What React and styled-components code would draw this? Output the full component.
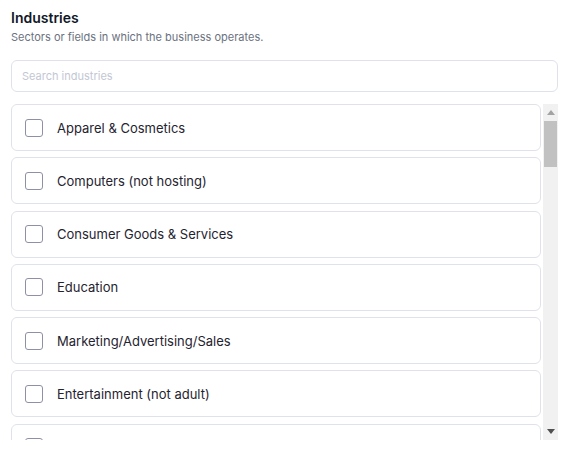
import React, { useState } from "react";
import styled, { createGlobalStyle } from "styled-components";

const industries = [
  "Apparel & Cosmetics",
  "Computers (not hosting)",
  "Consumer Goods & Services",
  "Education",
  "Marketing/Advertising/Sales",
  "Entertainment (not adult)",
  "Financial Services",
  "Healthcare",
  "Hospitality & Travel",
  "Manufacturing",
  "Non-profit",
  "Real Estate",
];

function App() {
  const [query, setQuery] = useState("");
  const [checked, setChecked] = useState({});

  const toggle = (name) => {
    setChecked((prev) => ({ ...prev, [name]: !prev[name] }));
  };

  const shown = industries.filter((i) =>
    i.toLowerCase().includes(query.toLowerCase())
  );

  return (
    <>
      <GlobalStyle />
      <Wrapper>
        <Title>Industries</Title>
        <Subtitle>Sectors or fields in which the business operates.</Subtitle>
        <SearchInput
          placeholder="Search industries"
          value={query}
          onChange={(e) => setQuery(e.target.value)}
        />
        <ListArea>
          <List>
            {shown.map((name) => (
              <Item key={name} onClick={() => toggle(name)}>
                <Box $checked={!!checked[name]} />
                <ItemLabel>{name}</ItemLabel>
              </Item>
            ))}
          </List>
          <ScrollTrack>
            <ScrollButton>
              <svg width="8" height="5" viewBox="0 0 8 5">
                <path d="M0 5h8L4 0z" fill="#a3a3a3" />
              </svg>
            </ScrollButton>
            <ThumbLane>
              <Thumb />
            </ThumbLane>
            <ScrollButton>
              <svg width="8" height="5" viewBox="0 0 8 5">
                <path d="M0 0h8L4 5z" fill="#505050" />
              </svg>
            </ScrollButton>
          </ScrollTrack>
        </ListArea>
      </Wrapper>
    </>
  );
}

const GlobalStyle = createGlobalStyle`
  body {
    margin: 0;
    background: #fff;
    font-family: Inter, "Liberation Sans", sans-serif;
  }
`;

const Wrapper = styled.div`
  display: flex;
  flex-direction: column;
  padding: 9px 5px 0 11px;
`;

const Title = styled.div`
  font-size: 14px;
  font-weight: 600;
  color: #111827;
  line-height: 18px;
`;

const Subtitle = styled.div`
  font-size: 11px;
  color: #6b7280;
  line-height: 14px;
  margin-top: 3px;
`;

const SearchInput = styled.input`
  margin-top: 16px;
  height: 32px;
  box-sizing: border-box;
  border: 1px solid #dfe2ea;
  border-radius: 6px;
  padding: 0 10px;
  font-family: Inter, "Liberation Sans", sans-serif;
  font-size: 11px;
  color: #111827;
  outline: none;
  &::placeholder {
    color: #c3c7d3;
  }
`;

const ListArea = styled.div`
  margin-top: 12px;
  height: 336px;
  display: flex;
  gap: 2px;
`;

const List = styled.div`
  flex: 1;
  min-width: 0;
  overflow-y: auto;
  scrollbar-width: none;
  display: flex;
  flex-direction: column;
  gap: 6.3px;
`;

const ScrollTrack = styled.div`
  flex: none;
  width: 15px;
  background: #f1f1f1;
  display: flex;
  flex-direction: column;
`;

const ScrollButton = styled.div`
  flex: none;
  height: 17px;
  display: flex;
  align-items: center;
  justify-content: center;
`;

const ThumbLane = styled.div`
  flex: 1;
  padding: 0 1px;
`;

const Thumb = styled.div`
  height: 46px;
  background: #c1c1c1;
`;

const Item = styled.div`
  flex: none;
  display: flex;
  align-items: center;
  gap: 14px;
  height: 47px;
  box-sizing: border-box;
  padding: 0 13px;
  border: 1px solid #dfe2ea;
  border-radius: 6px;
  cursor: pointer;
`;

const Box = styled.span`
  flex: none;
  width: 18px;
  height: 18px;
  box-sizing: border-box;
  border: 1px solid ${(p) => (p.$checked ? "#4f46e5" : "#8e90a6")};
  background: ${(p) => (p.$checked ? "#4f46e5" : "#fff")};
  border-radius: 3px;
`;

const ItemLabel = styled.span`
  font-size: 13px;
  color: #1f2430;
`;

export default App;
